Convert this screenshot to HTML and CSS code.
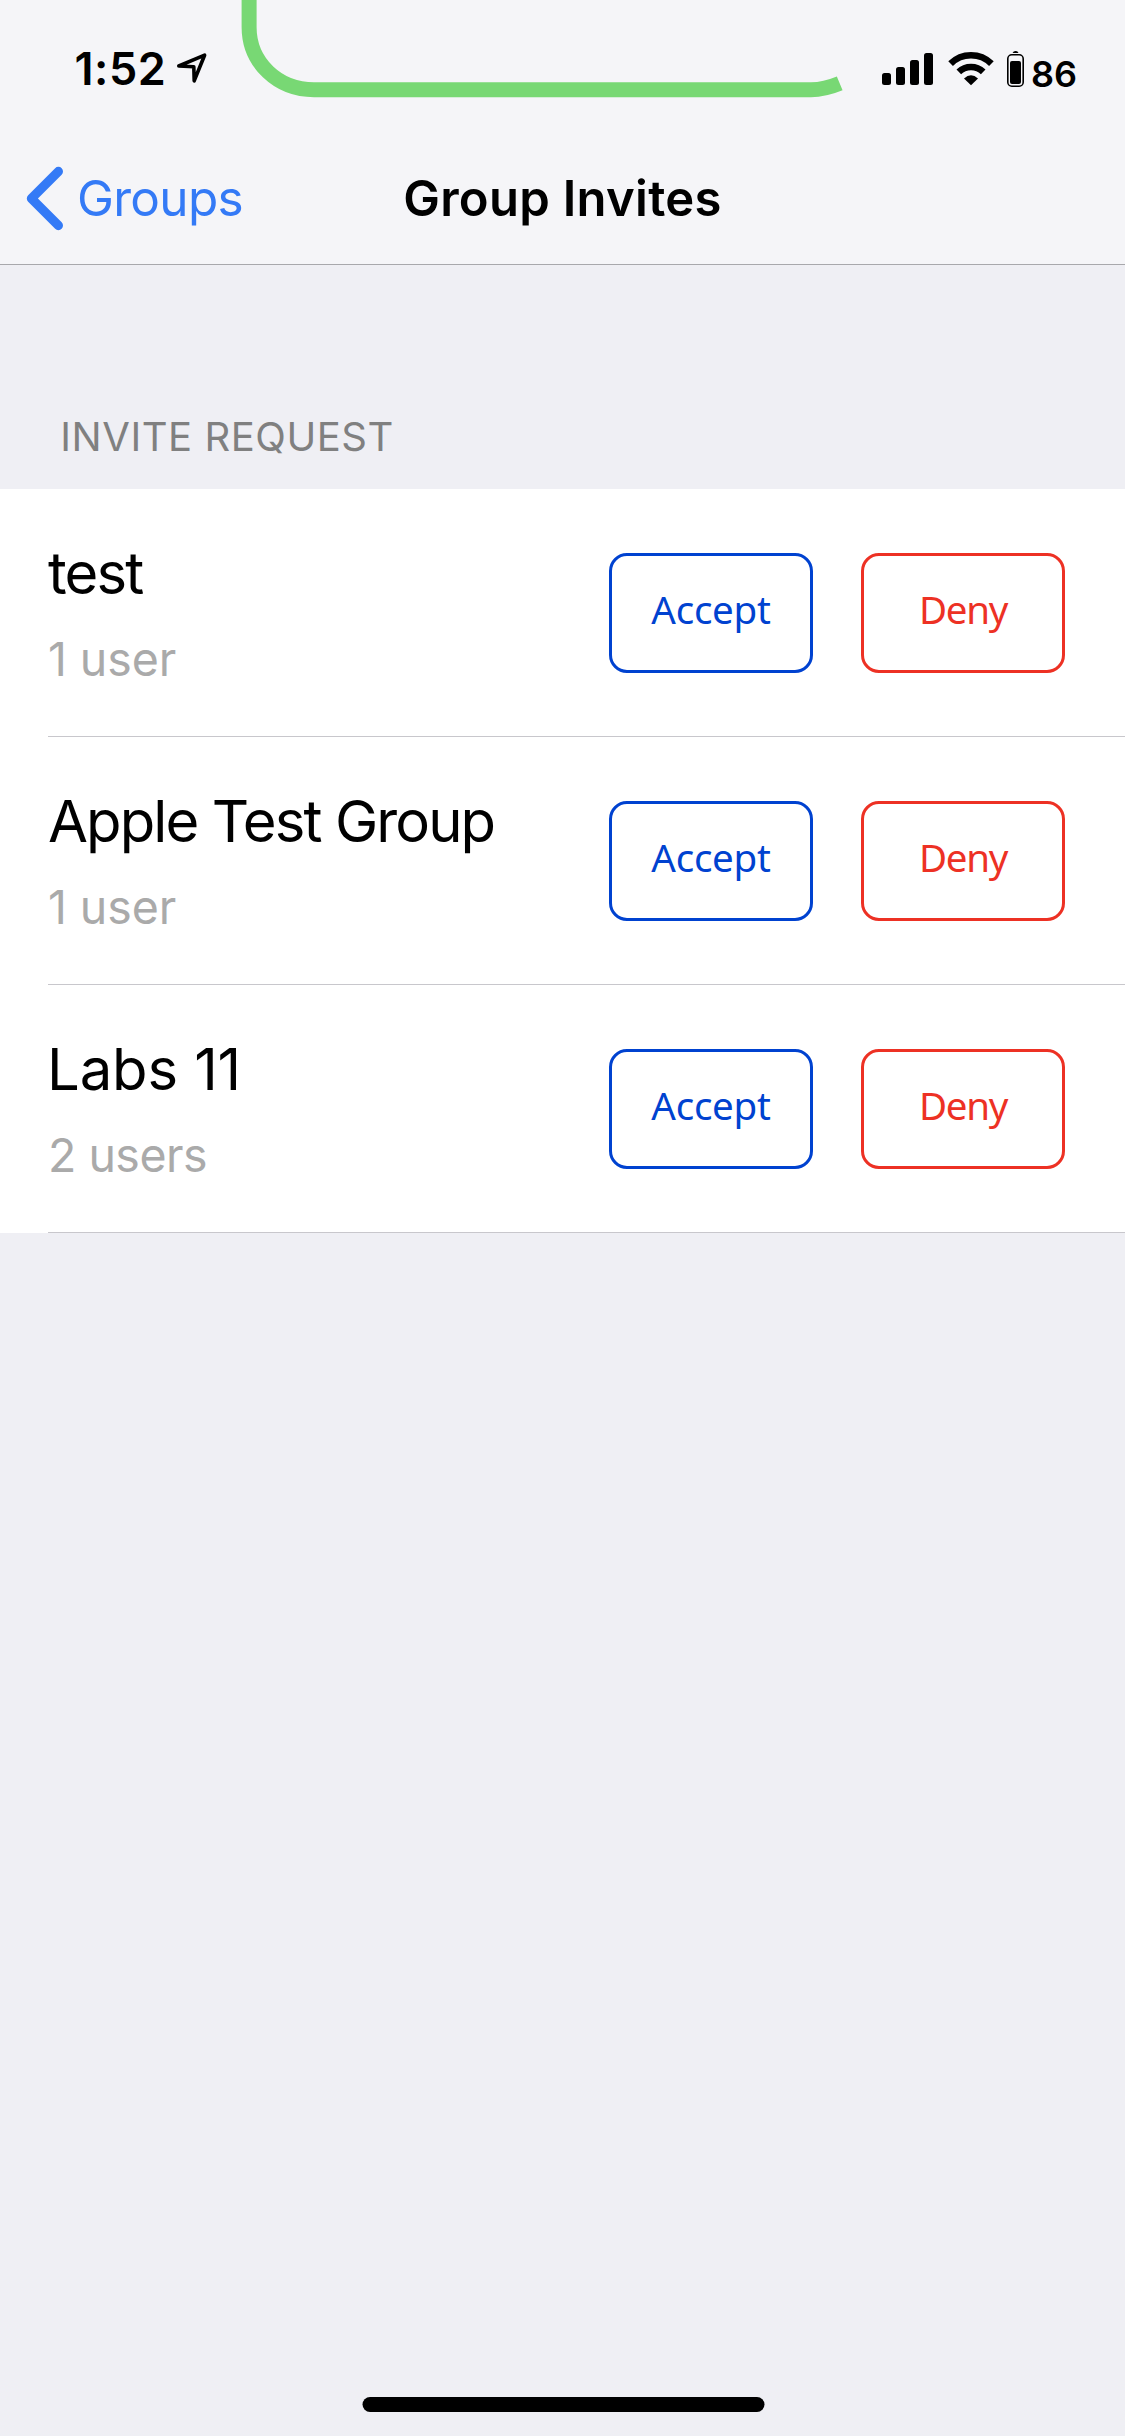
FILE: index.html
```
<!DOCTYPE html>
<html lang="en">
<head>
<meta charset="utf-8">
<title>Group Invites</title>
<link rel="stylesheet" href="styles.css">
</head>
<body>
<div class="screen">
  <header class="header">
    <div class="status-bar">
      <span class="time">1:52</span>
      <svg class="location" width="32" height="32" viewBox="0 0 32 32"><path d="M2.8 14 28.6 3.2 18.2 28.8 17.8 14.8Z" fill="none" stroke="#000" stroke-width="3.6" stroke-linejoin="round"/></svg>
      <div class="indicators">
        <svg class="signal" width="51" height="32" viewBox="0 0 51 32"><rect y="20" width="9" height="12" rx="2.5"/><rect x="14" y="14" width="9" height="18" rx="2.5"/><rect x="28" y="7" width="9" height="25" rx="2.5"/><rect x="42" width="9" height="32" rx="2.5"/></svg>
        <svg class="wifi" width="46" height="34" viewBox="0 0 46 34"><path d="M2.6 11.7A29 29 0 0 1 43.4 11.7M10.8 19.9A17.5 17.5 0 0 1 35.2 19.9" fill="none" stroke="#000" stroke-width="6.6"/><path d="M16 26.4Q23 20.2 30 26.4L23 33.3Z"/></svg>
        <svg class="battery" width="17" height="36" viewBox="0 0 17 36"><path d="M5.5 2Q6.5 0 8.5 0T11.5 2Z"/><rect x=".8" y="3.8" width="15.4" height="31.4" rx="4" fill="none" stroke="#000" stroke-width="1.6"/><rect x="3" y="10" width="11" height="23" rx="2"/></svg>
        <span class="level">86</span>
      </div>
    </div>
    <nav class="nav-bar">
      <a class="back">
        <svg class="chevron" width="40" height="66" viewBox="0 0 40 66"><path d="M34.4 6.4 7.4 33.4 34.4 60.6" fill="none" stroke="#347af6" stroke-width="9.2" stroke-linecap="round" stroke-linejoin="round"/></svg>
        <span>Groups</span>
      </a>
      <h1 class="title">Group Invites</h1>
      <span></span>
    </nav>
    <svg class="notch-outline" width="620" height="100" viewBox="0 0 620 100"><path d="M19.1 0V27C19.1 63 48 89.7 84 89.7H581C590 89.7 600 87.4 609.7 83.4" fill="none" stroke="#78d874" stroke-width="15"/></svg>
  </header>
  <main>
    <h2 class="section-title">INVITE REQUEST</h2>
    <ul class="invites">
      <li class="invite">
        <div class="info"><div class="name name-tight">test</div><div class="count">1 user</div></div>
        <button class="button accept">Accept</button><button class="button deny">Deny</button>
      </li>
      <li class="invite">
        <div class="info"><div class="name name-tight">Apple Test Group</div><div class="count">1 user</div></div>
        <button class="button accept">Accept</button><button class="button deny">Deny</button>
      </li>
      <li class="invite">
        <div class="info"><div class="name">Labs 11</div><div class="count count-plural">2 users</div></div>
        <button class="button accept">Accept</button><button class="button deny">Deny</button>
      </li>
    </ul>
  </main>
  <div class="home-indicator"></div>
</div>
</body>
</html>
```
FILE: styles.css
```
* { box-sizing: border-box; }
body { margin: 0; background: #efeff4; font-family: Inter, "Liberation Sans", sans-serif; color: #000; }
.screen { width: 1125px; height: 2436px; display: flex; flex-direction: column; background: #efeff4; overflow: hidden; }
.header { position: relative; height: 265px; background: #f5f5f8; border-bottom: 1px solid #a8a8ac; }
.notch-outline { position: absolute; left: 230px; top: 0; }
svg { display: block; flex: none; }

.status-bar { height: 132px; padding: 6px 48px 0 74.5px; display: flex; align-items: center; }
.time { width: 101px; font-size: 45px; font-weight: 600; letter-spacing: 0.5px; line-height: 54px; }
.location { margin-top: -2px; }
.indicators { margin-left: auto; display: flex; align-items: center; }
.wifi { margin-left: 15px; }
.battery { margin-left: 13px; }
.level { margin: 10px 0 0 7px; width: 46px; font-size: 36px; font-weight: 600; line-height: 44px; }

.nav-bar { height: 132px; display: grid; grid-template-columns: 1fr auto 1fr; align-items: center; line-height: 60px; }
.back { display: flex; align-items: center; gap: 13px; padding-left: 24px; color: #347af6; font-size: 49.5px; letter-spacing: -0.7px; }
.title { margin: 1px 0 0; padding-top: 1px; font-size: 49px; font-weight: 600; letter-spacing: 0.28px; }

.section-title { margin: 0; height: 224px; padding: 148px 0 0 60.3px; font-size: 40px; font-weight: 400; line-height: 48px; letter-spacing: 0.54px; color: #808080; }
.invites { list-style: none; margin: 0; padding: 0; background: #fff; }
.invite { height: 248px; display: flex; align-items: center; padding: 0 60px 0 48px; background: linear-gradient(#c8c7cc, #c8c7cc) 48px 100% / 100% 1px no-repeat; }
.info { flex: 1; align-self: flex-start; padding-top: 49px; }
.name { margin-left: -1px; font-size: 58px; line-height: 70px; letter-spacing: -0.13px; }
.name-tight { margin-left: 0; letter-spacing: -1.9px; }
.count { margin-top: 23px; font-size: 46.5px; line-height: 56px; letter-spacing: -0.1px; color: #aaa; }
.count-plural { letter-spacing: -0.52px; }
.button { width: 204px; height: 120px; padding: 0 0 8px; border: 3px solid; border-radius: 18px; background: none; font: 38.5px "Noto Sans", sans-serif; }
.accept { color: #0042d0; letter-spacing: -0.25px; }
.deny { margin-left: 48px; color: #ed3124; letter-spacing: -1.3px; }

.home-indicator { width: 402px; height: 15px; margin: auto auto 24px; border-radius: 7.5px; background: #000; transform: translateX(0.5px); }
```
